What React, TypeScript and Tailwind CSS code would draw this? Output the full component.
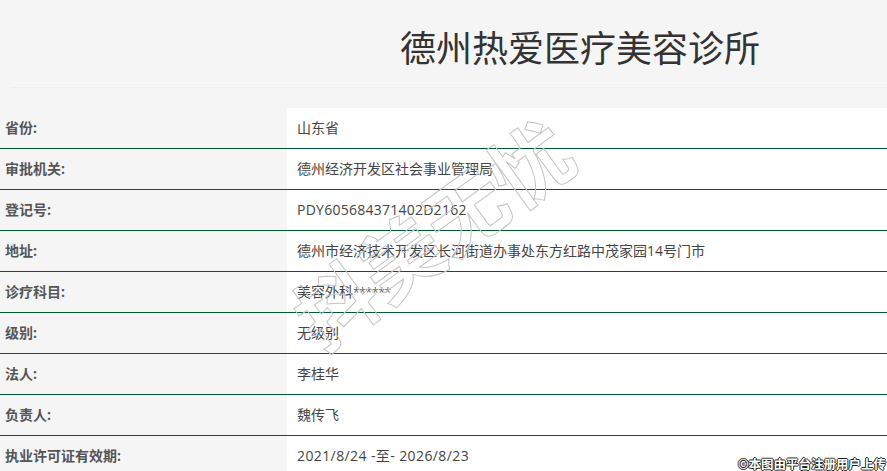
const rows = [
  { label: '省份:', value: '山东省' },
  { label: '审批机关:', value: '德州经济开发区社会事业管理局' },
  { label: '登记号:', value: 'PDY605684371402D2162', latin: 'tracking-[0.25px]' },
  { label: '地址:', value: '德州市经济技术开发区长河街道办事处东方红路中茂家园14号门市' },
  { label: '诊疗科目:', value: '美容外科', stars: '******' },
  { label: '级别:', value: '无级别' },
  { label: '法人:', value: '李桂华' },
  { label: '负责人:', value: '魏传飞' },
  { label: '执业许可证有效期:', value: '2021/8/24 -至- 2026/8/23', latin: 'tracking-[0.4px]' },
];

export default function App() {
  return (
    <div className="relative h-[471px] w-[887px] overflow-hidden bg-[#f5f5f5] font-['Open_Sans','Noto_Sans_CJK_SC',sans-serif]">
      {/* Title */}
      <div className="ml-[10px] h-[88px] border-b border-[#eeeeee] pl-[390px] pt-[17px]">
        <h1 className="text-[36px] leading-[58px] font-normal text-[#333333] font-['Noto_Sans_CJK_SC',sans-serif]">德州热爱医疗美容诊所</h1>
      </div>

      {/* Info rows */}
      <div className="mt-[20px]">
        {rows.map((row) => (
          <div key={row.label} className="grid h-[41px] grid-cols-[287px_1fr] grid-rows-[40px] border-b border-[#005a32] text-[14px] leading-[40px] last:border-b-0">
            <div className="pl-[5px] font-bold text-[#555555]">{row.label}</div>
            <div className={`bg-white pl-[10px] text-[#444444] ${row.latin ?? ''}`}>
              {row.value}
              {row.stars && <span className="text-[12px] leading-none tracking-[-0.3px] text-[#666666]">{row.stars}</span>}
            </div>
          </div>
        ))}
      </div>

      {/* Watermark */}
      <div className="pointer-events-none absolute left-[271px] top-[191px] rotate-[-36deg] whitespace-nowrap text-[80px] leading-none font-bold text-transparent [-webkit-text-stroke:1px_#c4c4c4] font-['Noto_Sans_CJK_SC',sans-serif]">
        抖美无忧
      </div>

      {/* Upload notice */}
      <div className="absolute bottom-0 right-[1px] text-[12.5px] leading-[14px] font-bold text-white [text-shadow:1px_0_0_#222,-1px_0_0_#222,0_1px_0_#222,0_-1px_0_#222] font-['Noto_Sans_CJK_SC',sans-serif]">
        ©本图由平台注册用户上传
      </div>
    </div>
  );
}
